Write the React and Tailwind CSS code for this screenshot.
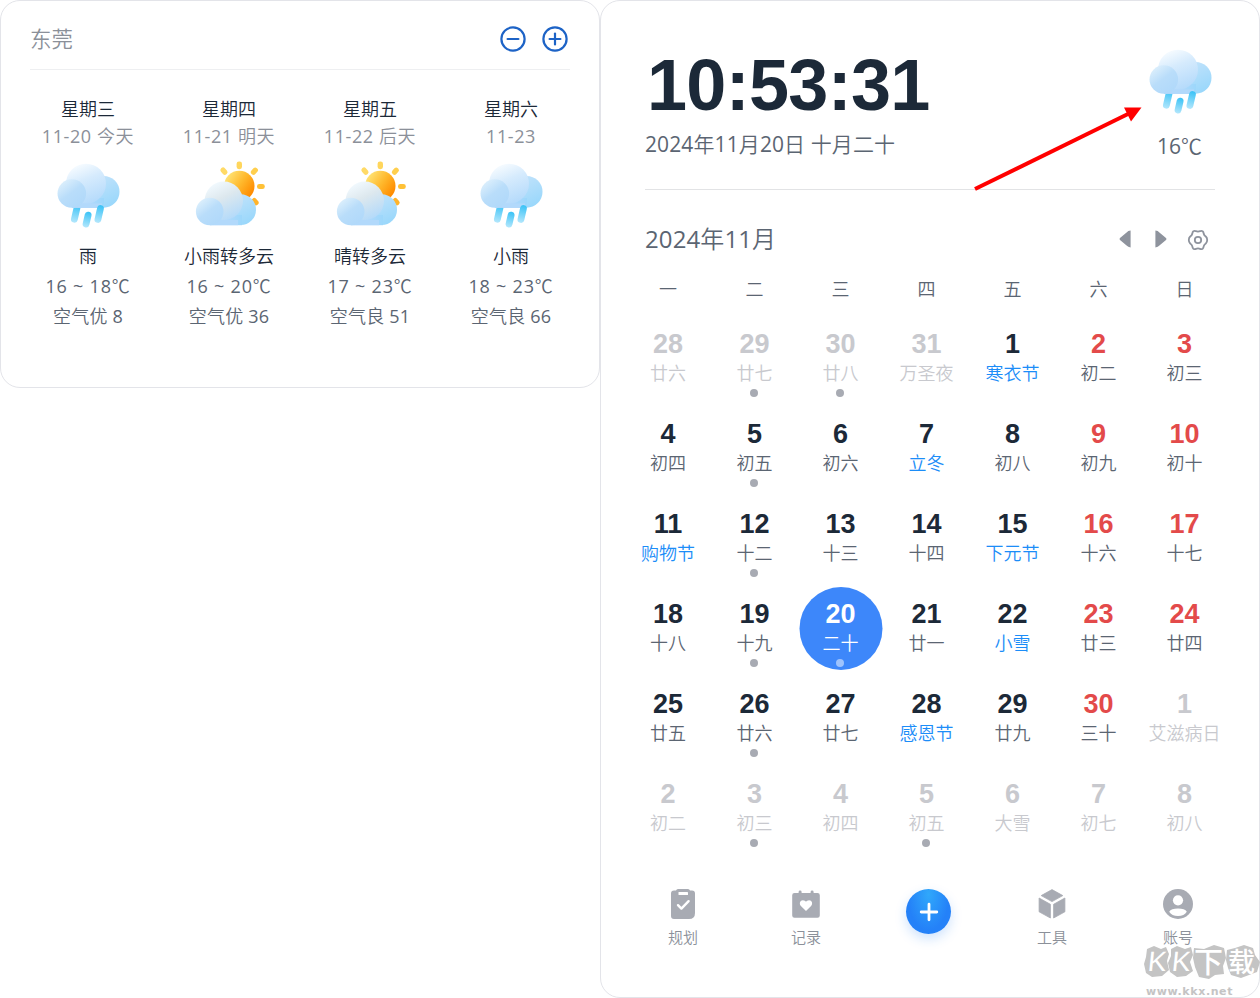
import React from "react";

const muted = "text-[#c8c9ce]";
const dark = "text-[#1c2938]";
const red = "text-[#e34a4a]";

const days = [
  ["28", "廿六", "m"], ["29", "廿七", "m", 1], ["30", "廿八", "m", 1], ["31", "万圣夜", "m"], ["1", "寒衣节", "f"], ["2", "初二", "r"], ["3", "初三", "r"],
  ["4", "初四"], ["5", "初五", "", 1], ["6", "初六"], ["7", "立冬", "f"], ["8", "初八"], ["9", "初九", "r"], ["10", "初十", "r"],
  ["11", "购物节", "f"], ["12", "十二", "", 1], ["13", "十三"], ["14", "十四"], ["15", "下元节", "f"], ["16", "十六", "r"], ["17", "十七", "r"],
  ["18", "十八"], ["19", "十九", "", 1], ["20", "二十", "s", 1], ["21", "廿一"], ["22", "小雪", "f"], ["23", "廿三", "r"], ["24", "廿四", "r"],
  ["25", "廿五"], ["26", "廿六", "", 1], ["27", "廿七"], ["28", "感恩节", "f"], ["29", "廿九"], ["30", "三十", "r"], ["1", "艾滋病日", "m"],
  ["2", "初二", "m"], ["3", "初三", "m", 1], ["4", "初四", "m"], ["5", "初五", "m", 1], ["6", "大雪", "m"], ["7", "初七", "m"], ["8", "初八", "m"],
];

const forecast = [
  ["星期三", "11-20 今天", "rain", "雨", "16 ~ 18℃", "空气优 8"],
  ["星期四", "11-21 明天", "sun", "小雨转多云", "16 ~ 20℃", "空气优 36"],
  ["星期五", "11-22 后天", "sun", "晴转多云", "17 ~ 23℃", "空气良 51"],
  ["星期六", "11-23", "rain", "小雨", "18 ~ 23℃", "空气良 66"],
];

// Digits are set in the regular weight, Chinese characters keep the lighter one.
function Mixed({ text }) {
  return text.split(/([0-9~ -]+)/).filter(Boolean).map((part, i) =>
    /[0-9~-]/.test(part) ? <span key={i} className="font-normal">{part}</span> : part
  );
}

function WeatherDefs() {
  return (
    <svg width="0" height="0" className="absolute">
      <defs>
        <linearGradient id="puffRight" x1="0.2" y1="0" x2="0.7" y2="1">
          <stop offset="0" stopColor="#c4e3fb" />
          <stop offset="1" stopColor="#98d7fb" />
        </linearGradient>
        <linearGradient id="puffMain" x1="0.25" y1="0.02" x2="0.65" y2="1">
          <stop offset="0" stopColor="#f8fcff" />
          <stop offset="0.4" stopColor="#d6ebfd" />
          <stop offset="1" stopColor="#b4dafb" />
        </linearGradient>
        <linearGradient id="puffLeft" x1="0.15" y1="0.1" x2="0.75" y2="0.9">
          <stop offset="0" stopColor="#dceffc" />
          <stop offset="0.5" stopColor="#b9ddfa" />
          <stop offset="1" stopColor="#b1d9fa" />
        </linearGradient>
        <linearGradient id="cloudBase" x1="0" y1="0" x2="1" y2="0">
          <stop offset="0" stopColor="#afd8fa" />
          <stop offset="0.5" stopColor="#b2d9fb" />
          <stop offset="1" stopColor="#9cd7fb" />
        </linearGradient>
        <linearGradient id="puffWarm" x1="0.2" y1="0.1" x2="0.65" y2="1">
          <stop offset="0" stopColor="#f0f8fd" />
          <stop offset="0.4" stopColor="#dde8ee" />
          <stop offset="1" stopColor="#b3dafa" />
        </linearGradient>
        <linearGradient id="drop" x1="0" y1="0" x2="0" y2="1">
          <stop offset="0" stopColor="#38c2f6" />
          <stop offset="1" stopColor="#b4e7fc" />
        </linearGradient>
        <linearGradient id="sunFill" x1="0.1" y1="0.2" x2="0.9" y2="0.75">
          <stop offset="0" stopColor="#ffe171" />
          <stop offset="0.5" stopColor="#ffb92d" />
          <stop offset="1" stopColor="#ff8c00" />
        </linearGradient>
        <filter id="softEdge" x="-10%" y="-10%" width="120%" height="120%">
          <feGaussianBlur stdDeviation="0.7" />
        </filter>
      </defs>
    </svg>
  );
}

function RainIcon() {
  return (
    <svg width="72" height="72" viewBox="0 0 72 72" className="shrink-0">
      <g fill="url(#drop)">
        <rect x="20.2" y="46" width="6.8" height="18.8" rx="3.4" transform="rotate(13 23.6 56)" />
        <rect x="31.6" y="53.6" width="6.8" height="16" rx="3.4" transform="rotate(13 35 62)" />
      </g>
      <g filter="url(#softEdge)">
        <circle cx="51.6" cy="33.8" r="15.9" fill="url(#puffRight)" />
        <path d="M20 40H52V49.8H20Z" fill="url(#cloudBase)" />
        <circle cx="34" cy="25.7" r="20" fill="url(#puffMain)" />
        <path d="M20 45.5H50V49.8H20Z" fill="#b2d9fb" />
        <circle cx="19.8" cy="35.5" r="14.3" fill="url(#puffLeft)" />
      </g>
      <rect x="43.8" y="47" width="6.8" height="18" rx="3.4" transform="rotate(13 47.2 56)" fill="url(#drop)" />
    </svg>
  );
}

function SunCloudIcon() {
  return (
    <svg width="72" height="72" viewBox="0 0 72 72" className="mr-[3px] shrink-0 overflow-visible">
      <circle cx="47.3" cy="28" r="15.2" fill="url(#sunFill)" />
      <g>
        <rect x="44.6" y="3.4" width="5.4" height="7.8" rx="2.4" fill="#ffd65c" />
        <rect x="29.4" y="9.2" width="5.2" height="7.8" rx="2.4" fill="#ffda66" transform="rotate(-42 32 13.2)" />
        <rect x="60" y="9.4" width="5.2" height="7.8" rx="2.4" fill="#ffcf4e" transform="rotate(42 62.6 13)" />
        <rect x="65" y="25.9" width="7.8" height="5.2" rx="2.4" fill="#ffc136" />
        <rect x="60.5" y="39.6" width="5.2" height="7.8" rx="2.4" fill="#ffb42b" transform="rotate(-42 63.3 43.6)" />
      </g>
      <g filter="url(#softEdge)">
        <circle cx="48.6" cy="51.7" r="15.4" fill="url(#puffRight)" />
        <path d="M18 57H50V67.2H18Z" fill="url(#cloudBase)" />
        <circle cx="31.8" cy="42.8" r="19.2" fill="url(#puffWarm)" />
        <path d="M18 62H46V67.2H18Z" fill="#b2d9fb" />
        <circle cx="17.7" cy="53.5" r="13.8" fill="url(#puffLeft)" />
      </g>
    </svg>
  );
}

function RoundButton({ plus }) {
  return (
    <svg width="26" height="26" viewBox="0 0 26 26" fill="none" stroke="#1d63c6" strokeWidth="2.2" strokeLinecap="round">
      <circle cx="13" cy="13" r="11.6" />
      <path d="M7.6 13H18.4" />
      {plus && <path d="M13 7.6V18.4" />}
    </svg>
  );
}

function WeatherCard() {
  return (
    <section className="h-[388px] w-[600px] shrink-0 rounded-[20px] border border-[#e3e4e9] px-[29px] pt-[11px]">
      <header className="flex h-[58px] items-center justify-between border-b border-[#eeeff1] pr-[2px] pb-[3px]">
        <h2 className="text-[21.5px] leading-none font-[350] text-[#8b9099]">东莞</h2>
        <div className="flex gap-4">
          <RoundButton />
          <RoundButton plus />
        </div>
      </header>
      <div className="-ml-[12.5px] grid w-[564px] grid-cols-4 pt-[25px] text-center text-[18px] font-[350]">
        {forecast.map(([week, date, icon, text, temp, air]) => (
          <div key={week} className="flex flex-col items-center whitespace-nowrap">
            <div className="h-[27px] leading-[28px] text-[#1c2938]">{week}</div>
            <div className="h-[27px] leading-[28px] tracking-[0.6px] text-[#8b9099]"><Mixed text={date} /></div>
            <div className="flex h-[85px] pt-[9px]">{icon === "rain" ? <RainIcon /> : <SunCloudIcon />}</div>
            <div className="h-[30px] pt-[8px] leading-[28px] text-[#1c2938]">{text}</div>
            <div className="h-[30px] pt-[8px] leading-[28px] tracking-[0.8px] text-[#5b6572]"><Mixed text={temp} /></div>
            <div className="h-[30px] pt-[8px] leading-[28px] tracking-[0.2px] text-[#5b6572]"><Mixed text={air} /></div>
          </div>
        ))}
      </div>
    </section>
  );
}

function Day({ day }) {
  const [num, label, kind, dot] = day;
  const numColor = kind === "m" ? muted : kind === "r" ? red : kind === "s" ? "text-white" : dark;
  const labelColor = kind === "m" ? muted : kind === "f" ? "text-[#1c8df8]" : kind === "s" ? "text-white" : "text-[#5b6572]";
  return (
    <div className="relative flex h-[90px] flex-col items-center whitespace-nowrap">
      {kind === "s" && <div className="absolute -top-[2px] left-1/2 size-[83px] -translate-x-1/2 rounded-full bg-[#3d87fa]" />}
      <div className={`relative mt-[10px] h-[29px] font-['Liberation_Sans'] text-[27px] leading-[30px] font-bold ${numColor}`}>{num}</div>
      <div className={`relative h-[30px] text-[18px] leading-[30px] font-[350] ${labelColor}`}>{label}</div>
      {dot && <div className={`absolute top-[70px] left-1/2 -ml-[5px] size-2 rounded-full ${kind === "s" ? "bg-[#9ec3fd]" : "bg-[#a8abb3]"}`} />}
    </div>
  );
}

function PlanIcon() {
  return (
    <svg width="30" height="30" viewBox="0 0 30 30">
      <path fill="#a8abb3" d="M8 1.5Q8.5 0 10 0H20Q21.5 0 22 1.5H24Q27 1.5 27 4.5V24Q27 30 21 30H6Q3 30 3 27V4.5Q3 1.5 6 1.5Z" />
      <rect x="10.5" y="3" width="9.5" height="3" rx=".6" fill="#fff" />
      <path d="M10 16.2L13.4 19.6L20.6 12.2" fill="none" stroke="#fff" strokeWidth="2.4" strokeLinecap="round" strokeLinejoin="round" />
    </svg>
  );
}

function RecordIcon() {
  return (
    <svg width="30" height="30" viewBox="0 0 30 30">
      <path fill="#a8abb3" d="M7.6 4V3Q7.6 1.6 9.1 1.6T10.6 3V4H19.6V3Q19.6 1.6 21.1 1.6T22.6 3V4H26.5Q28.8 4 28.8 6.3V26.4Q28.8 28.7 26.5 28.7H3.5Q1.2 28.7 1.2 26.4V6.3Q1.2 4 3.5 4Z" />
      <path fill="#fff" d="M15 22L10.4 17.6C7.5 14.6 9.2 11.2 11.9 11.2C13.4 11.2 14.5 12 15 12.8C15.5 12 16.6 11.2 18.1 11.2C20.8 11.2 22.5 14.6 19.6 17.6Z" />
    </svg>
  );
}

function ToolIcon() {
  return (
    <svg width="30" height="30" viewBox="0 0 30 30" fill="#a8abb3" stroke="#a8abb3" strokeWidth=".8" strokeLinejoin="round">
      <path d="M15 .6L25.8 6.6L15 12.6L4.2 6.6Z" />
      <path d="M2.1 9L13.4 15.3V29L2.1 22.8Z" />
      <path d="M27.9 9L16.6 15.3V29L27.9 22.8Z" />
    </svg>
  );
}

function AccountIcon() {
  return (
    <svg width="30" height="30" viewBox="0 0 30 30">
      <circle cx="15" cy="15" r="15" fill="#a8abb3" />
      <circle cx="15" cy="11.3" r="5.1" fill="#fff" />
      <path fill="#fff" d="M6.2 22.8C7.3 20.6 10.7 19.6 15 19.6S22.7 20.6 23.8 22.8C22.3 25.6 19 27 15 27S7.7 25.6 6.2 22.8Z" />
    </svg>
  );
}

function NavItem({ icon, label }) {
  return (
    <div className="flex flex-col items-center">
      {icon}
      <span className="mt-[7.5px] text-[15px] leading-[20px] font-[350] text-[#8b9099]">{label}</span>
    </div>
  );
}

function CalendarCard() {
  return (
    <section className="h-[998px] w-[660px] shrink-0 rounded-[20px] border border-[#e3e4e9] px-[44px]">
      <header className="flex h-[189px] justify-between border-b border-[#e2e3e5]">
        <div className="pt-[44px]">
          <div className="pl-[2px] font-['Liberation_Sans'] text-[72px] leading-[80px] font-bold tracking-[-0.7px] text-[#1c2938]">10:53:31</div>
          <div className="mt-[4px] text-[21px] leading-[30px] font-[350] tracking-[0.1px] text-[#5b6572]"><Mixed text="2024年11月20日 十月二十" /></div>
        </div>
        <div className="-mr-[0.5px] flex flex-col items-center pt-[42.5px]">
          <RainIcon />
          <div className="mt-[15.5px] text-[21px] leading-[30px] font-[350] text-[#5b6572]"><Mixed text="16℃" /></div>
        </div>
      </header>
      <div className="flex h-[84px] items-center justify-between pt-[14px]">
        <h1 className="text-[24px] leading-[32px] font-[350] tracking-[0.1px] text-[#5b6572]"><Mixed text="2024年11月" /></h1>
        <div className="flex items-center pr-[6.5px] pb-[1px]">
          <svg width="12" height="18" viewBox="0 0 12 18" fill="#8e939d"><path d="M11.6.6V17.4Q9 17.4 7.6 15.6L1 10Q0 9 1 8L7.6 2.4Q9 .6 11.6.6Z" /></svg>
          <svg width="12" height="18" viewBox="0 0 12 18" fill="#8e939d" className="ml-[24px]"><path d="M.4.6V17.4Q3 17.4 4.4 15.6L11 10Q12 9 11 8L4.4 2.4Q3 .6.4.6Z" /></svg>
          <svg width="22" height="22" viewBox="0 0 22 22" fill="none" stroke="#8e939d" strokeWidth="1.8" strokeLinejoin="round" className="mt-[2px] ml-[20px]">
            <path d="M6.4 2.2Q7.8 1.4 9 2.2Q11 3 13 2.2Q14.2 1.4 15.6 2.2Q16.6 3 16.7 4.7Q17.2 6.6 18.8 7.5Q20.2 8.8 20.2 11T18.8 14.5Q17.2 15.4 16.7 17.3Q16.6 19 15.6 19.8Q14.2 20.6 13 19.8Q11 19 9 19.8Q7.8 20.6 6.4 19.8Q5.4 19 5.3 17.3Q4.8 15.4 3.2 14.5Q1.8 13.2 1.8 11T3.2 7.5Q4.8 6.6 5.3 4.7Q5.4 3 6.4 2.2Z" />
            <circle cx="11" cy="11" r="3.2" />
          </svg>
        </div>
      </div>
      <div className="-ml-[20.4px] grid w-[603px] grid-cols-[87px_86px_86px_86px_86px_86px_86px] text-center">
        {["一", "二", "三", "四", "五", "六", "日"].map((d) => (
          <div key={d} className="h-[45px] text-[18px] leading-[30px] font-[350] text-[#5b6572]">{d}</div>
        ))}
        {days.map((d, i) => <Day key={i} day={d} />)}
      </div>
      <nav className="-ml-[23.5px] grid w-[620px] grid-cols-[123px_123px_122px_125px_127px] pt-[30px]">
        <NavItem icon={<PlanIcon />} label="规划" />
        <NavItem icon={<RecordIcon />} label="记录" />
        <div className="flex justify-center">
          <div className="flex size-[45px] items-center justify-center rounded-full bg-radial-[at_50%_12%] from-[#30a8fb] to-[#2481f8] to-65% shadow-[0_5px_12px_rgba(36,129,248,0.22)]">
            <svg width="20" height="20" viewBox="0 0 20 20" stroke="#fff" strokeWidth="2.8" strokeLinecap="round"><path d="M10 2.2V17.8M2.2 10H17.8" /></svg>
          </div>
        </div>
        <NavItem icon={<ToolIcon />} label="工具" />
        <NavItem icon={<AccountIcon />} label="账号" />
      </nav>
    </section>
  );
}

function Watermark() {
  return (
    <div className="absolute top-[944px] left-[1142px] h-[54px] w-[118px]">
      <svg width="118" height="36" viewBox="0 0 118 36" fill="#c4c4c4" className="absolute top-0 left-0">
        <path d="M5 5L12 2L19 5L24 3L27 10L25 17L27 26L20 32L10 33L4 29L2 20L4 13Z" />
        <path d="M29 5L35 2L43 5L49 3L51 11L48 18L51 27L44 32L35 33L28 28L26 19L29 12Z" />
        <path d="M52 4L62 5L72 1L82 4L84 14L81 22L82 30L73 31L67 35L57 33L53 23L51 14Z" />
        <path d="M85 6L93 4L102 1L111 4L113 11L118 18L115 28L107 31L99 34L89 31L86 24L84 16Z" />
      </svg>
      <div className="relative flex h-[35px] items-center pl-[6px] leading-[35px] font-medium whitespace-nowrap text-white">
        <span className="w-[24px] -skew-x-6 font-['Liberation_Sans'] text-[28px]">K</span>
        <span className="w-[22px] -skew-x-6 font-['Liberation_Sans'] text-[28px]">K</span>
        <span className="w-[34px] text-[29px]">下</span>
        <span className="text-[27px]">载</span>
      </div>
      <div className="relative mt-[6px] h-[13px] pl-[4px] font-['DejaVu_Sans'] text-[11px] leading-[13px] font-bold tracking-[0.6px] text-[#c4c4c4]">www.kkx.net</div>
    </div>
  );
}

export default function App() {
  return (
    <main className="relative flex h-[998px] w-[1260px] items-start overflow-hidden bg-white font-['Open_Sans','Noto_Sans_CJK_SC',sans-serif]">
      <WeatherDefs />
      <WeatherCard />
      <CalendarCard />
      <svg width="176" height="90" viewBox="970 103 176 90" className="absolute top-[103px] left-[970px]">
        <path d="M975 189L1129 113.5" stroke="#f00" strokeWidth="4" />
        <path d="M1141.5 107.5H1124L1131 121.5Z" fill="#f00" />
      </svg>
      <Watermark />
    </main>
  );
}
